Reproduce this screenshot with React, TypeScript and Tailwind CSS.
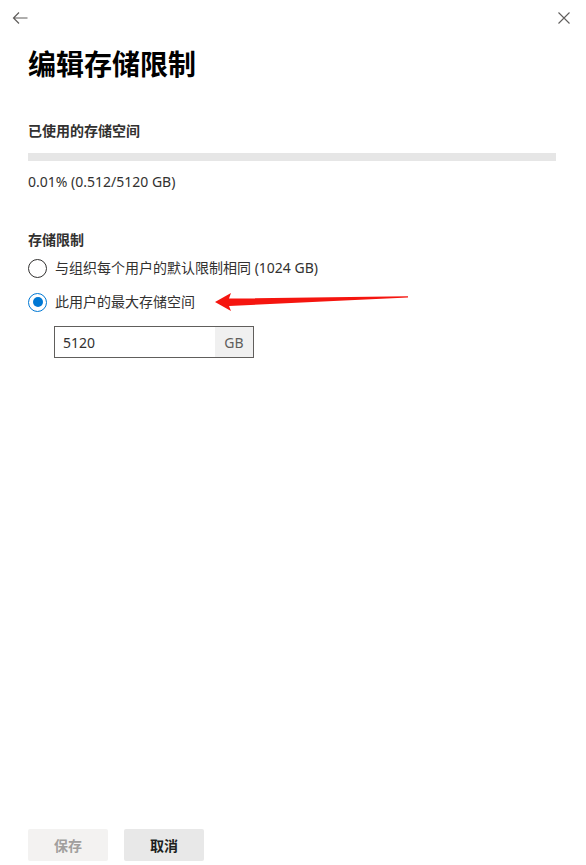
import React, { useState } from "react";

const font = { fontFamily: '"Noto Sans", "Noto Sans CJK SC", sans-serif' };

const App: React.FC = () => {
  const [mode, setMode] = useState<"default" | "custom">("custom");
  const [limit, setLimit] = useState("5120");

  return (
    <div className="w-[586px] h-[865px] bg-white text-[#323130] flex flex-col" style={font}>
      {/* Top bar */}
      <div className="flex items-center justify-between h-[36px] pl-[12px] pr-[16px]">
        <button className="w-[16px] h-[16px] flex items-center justify-center text-[#605e5c]">
          <svg width="16" height="14" viewBox="0 0 16 14" fill="none">
            <path d="M15.5 7H1.5M7 1.5L1.5 7L7 12.5" stroke="currentColor" strokeWidth="1.2" />
          </svg>
        </button>
        <button className="w-[12px] h-[12px] flex items-center justify-center text-[#605e5c]">
          <svg width="12" height="12" viewBox="0 0 12 12" fill="none">
            <path d="M0.5 0.5L11.5 11.5M11.5 0.5L0.5 11.5" stroke="currentColor" strokeWidth="1.1" />
          </svg>
        </button>
      </div>

      <div className="flex-1 flex flex-col pl-[28px] pr-[30px]">
        <h1 className="mt-[8px] text-[28px] leading-[40px] font-bold text-black">编辑存储限制</h1>

        {/* Usage */}
        <div className="mt-[37px] text-[14px] leading-[20px] font-semibold">已使用的存储空间</div>
        <div className="mt-[12px] h-[8px] w-full bg-[#e6e6e6]">
          <div className="h-full bg-[#0078d4]" style={{ width: "0.01%" }} />
        </div>
        <div className="mt-[11px] text-[14px] leading-[20px] text-[#323130]">0.01% (0.512/5120 GB)</div>

        {/* Limit */}
        <div className="mt-[38px] text-[14px] leading-[20px] font-semibold">存储限制</div>
        <div className="mt-[8px] flex flex-col gap-[14px]">
          <label className="flex items-center gap-[8px] cursor-pointer" onClick={() => setMode("default")}>
            <span
              className={`w-[19px] h-[19px] rounded-full border flex items-center justify-center ${
                mode === "default" ? "border-[#0078d4]" : "border-[#323130]"
              }`}
            >
              {mode === "default" && <span className="w-[10px] h-[10px] rounded-full bg-[#0078d4]" />}
            </span>
            <span className="text-[14px] leading-[20px]">与组织每个用户的默认限制相同 (1024 GB)</span>
          </label>
          <div className="relative">
            <label className="flex items-center gap-[8px] cursor-pointer" onClick={() => setMode("custom")}>
              <span
                className={`w-[19px] h-[19px] rounded-full border flex items-center justify-center ${
                  mode === "custom" ? "border-[#0078d4]" : "border-[#323130]"
                }`}
              >
                {mode === "custom" && <span className="w-[10px] h-[10px] rounded-full bg-[#0078d4]" />}
              </span>
              <span className="text-[14px] leading-[20px]">此用户的最大存储空间</span>
            </label>
            {/* annotation arrow */}
            <svg
              className="absolute left-[187px] top-[-2px]"
              width="194"
              height="22"
              viewBox="0 0 194 22"
              fill="none"
            >
              <path d="M0 12L16 3L14 8.5L193 6.2L193 7.4L14 16L16 21Z" fill="#f5150f" />
            </svg>
          </div>
        </div>

        <div className="mt-[14px] ml-[26px] flex w-[200px] h-[32px] border border-[#605e5c]">
          <input
            value={limit}
            onChange={(e) => setLimit(e.target.value)}
            className="flex-1 min-w-0 px-[8px] text-[14px] outline-none bg-white text-[#323130]"
            style={font}
          />
          <span className="w-[38px] flex items-center justify-center bg-[#f0f0f0] text-[14px] text-[#605e5c]">
            GB
          </span>
        </div>
      </div>

      {/* Footer */}
      <div className="flex gap-[16px] px-[28px] pb-[4px]">
        <button
          disabled
          className="w-[80px] h-[32px] rounded-[2px] bg-[#f3f2f1] text-[14px] font-semibold text-[#a19f9d]"
          style={font}
        >
          保存
        </button>
        <button
          className="w-[80px] h-[32px] rounded-[2px] bg-[#e8e8e8] text-[14px] font-semibold text-[#201f1e]"
          style={font}
        >
          取消
        </button>
      </div>
    </div>
  );
};

export default App;
